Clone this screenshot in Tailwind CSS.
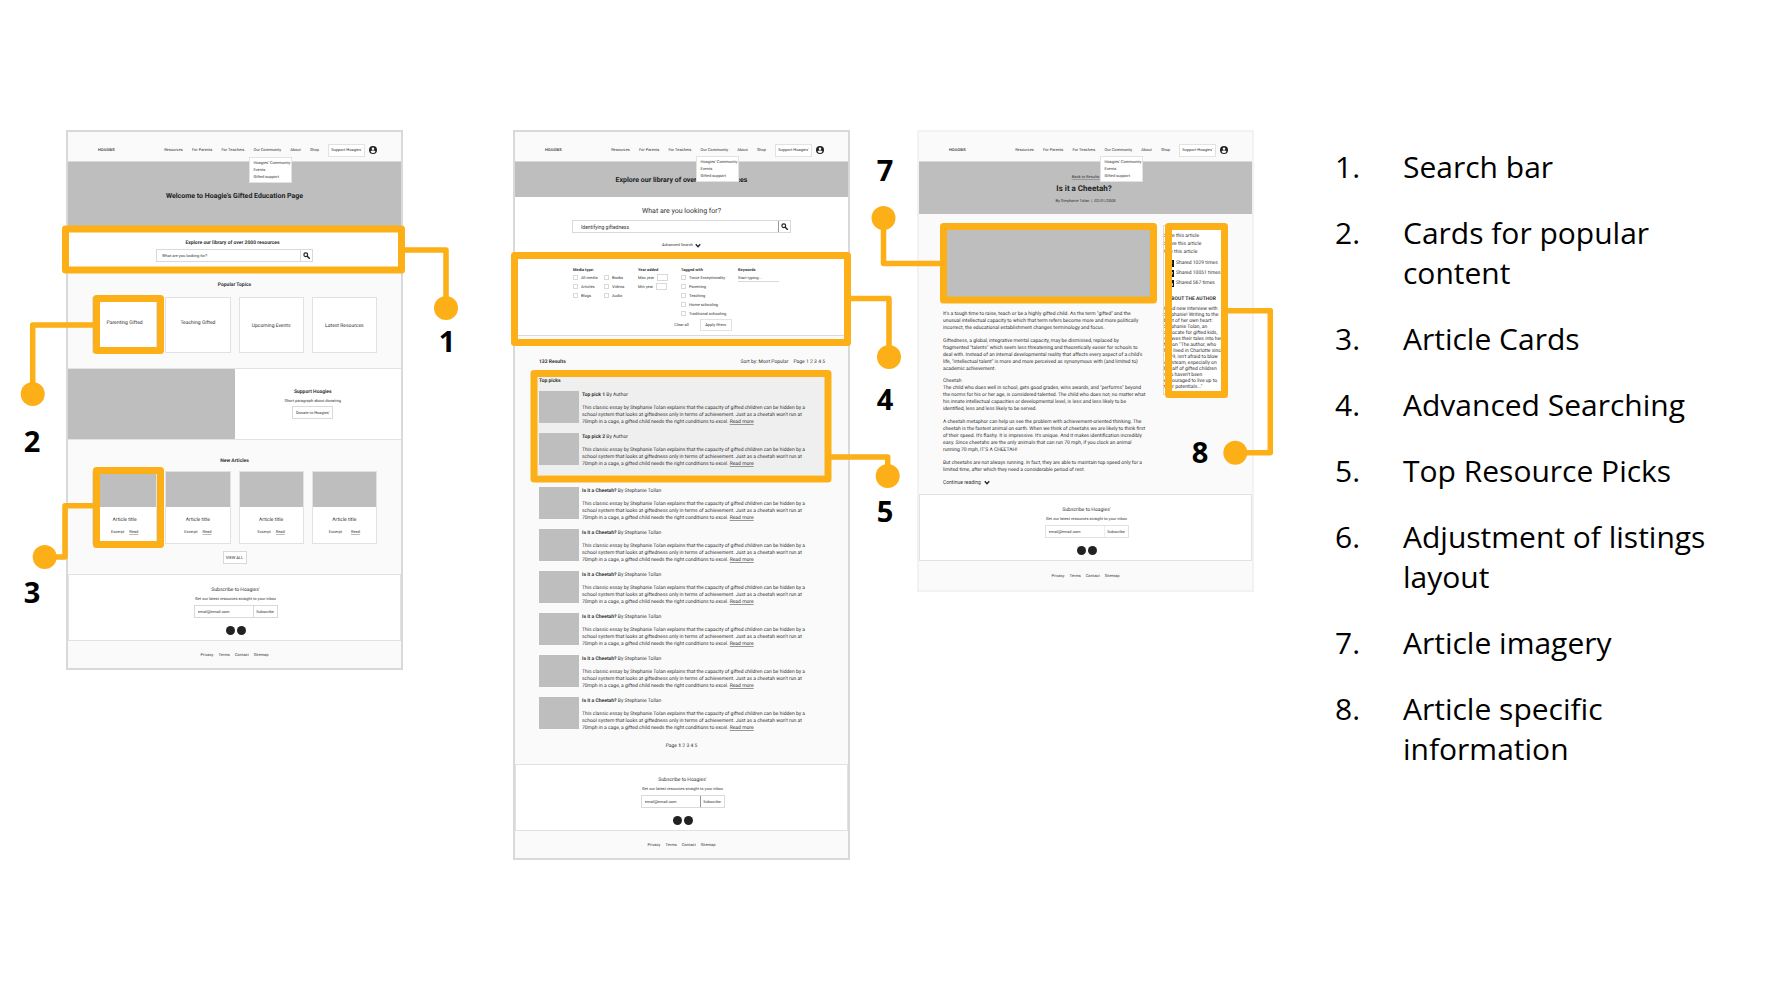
<!DOCTYPE html>
<html lang="en">
<head>
<meta charset="utf-8">
<title>Hoagies' wireframes, annotated</title>
<script src="https://cdn.jsdelivr.net/npm/@tailwindcss/browser@4"></script>
</head>
<body class="bg-white text-black">
<svg class="hidden" aria-hidden="true">
  <symbol id="user" viewBox="0 0 24 24"><circle cx="12" cy="12" r="12" fill="#222"/><circle cx="12" cy="8.500" r="3.800" fill="#fafafa"/><path d="M4.500 17.500c1-3 4-4 7.500-4s6.500 1 7.500 4c-2 2.500-4.500 3.700-7.500 3.700s-5.500-1.200-7.500-3.700z" fill="#fafafa"/></symbol>
  <symbol id="find" viewBox="0 0 24 24"><circle cx="9.500" cy="9.500" r="6.500" fill="none" stroke="#222" stroke-width="4"/><path d="M14.500 14.500L21.500 21.500" stroke="#222" stroke-width="5" stroke-linecap="round"/></symbol>
  <symbol id="chev" viewBox="0 0 12 10"><path d="M1.500 2.500L6 7.500L10.500 2.500" fill="none" stroke="#222" stroke-width="2.600"/></symbol>
</svg>
<main class="flex items-start pl-[66px] pr-12 pt-[130px] pb-16">

  <!-- Home page -->
  <figure class="relative mr-[110px] w-[337px] shrink-0">
    <div class="border-2 border-[#d9d9d9] bg-[#fafafa] font-['Roboto',sans-serif] text-[4px] leading-[6px] text-[#333] [text-rendering:geometricPrecision] [&_input]:outline-none">
      <header class="flex h-[30px] items-center border-b border-[#d9d9d9] pl-[30px] pr-6 pt-[7px]">
        <b class="font-medium">HOAGIES</b>
        <nav class="ml-auto flex items-center gap-[9px] whitespace-nowrap">
          <a href="#">Resources</a><a href="#">For Parents</a><a href="#">For Teachers</a>
          <div class="relative"><a href="#">Our Community</a>
            <ul class="absolute -left-1 top-full z-10 mt-1 flex w-[43px] flex-col gap-px border border-[#e2e2e2] bg-white py-[2px] pl-[3px]"><li><a href="#">Hoagies' Community</a></li><li><a href="#">Events</a></li><li><a href="#">Gifted support</a></li></ul>
          </div>
          <a href="#">About</a><a href="#">Shop</a>
          <button class="h-[13px] w-[37px] border border-[#e2e2e2] bg-white">Support Hoagies'</button>
        </nav>
        <svg class="ml-1 size-[8px]"><use href="#user"/></svg>
      </header>
      <div class="flex h-16 items-center justify-center bg-[#bebebe] pt-[3px]"><h1 class="text-[7px] font-bold text-[#222]">Welcome to Hoagie's Gifted Education Page</h1></div>
      <section class="flex h-[46px] flex-col items-center bg-white pt-[14px]">
        <h2 class="pr-1 text-[5px] font-bold">Explore our library of over 2000 resources</h2>
        <form class="mt-[3px] flex h-[13px] w-[157px] border border-[#d9d9d9]">
          <input aria-label="Search" placeholder="What are you looking for?" class="min-w-0 flex-1 pl-[5px] placeholder:text-[#333]">
          <button type="button" aria-label="Search" class="flex w-3 items-center justify-center border-l border-[#d9d9d9]"><svg class="size-[7px]"><use href="#find"/></svg></button>
        </form>
      </section>
      <section class="px-6 pb-[15px] pt-[10px]">
        <h2 class="text-center text-[5px] font-bold">Popular Topics</h2>
        <div class="mt-[9px] grid grid-cols-4 gap-2 text-center text-[5px]">
          <a href="#" class="flex h-14 items-center justify-center border border-[#e2e2e2] bg-white pb-1">Parenting Gifted</a>
          <a href="#" class="flex h-14 items-center justify-center border border-[#e2e2e2] bg-white pb-1">Teaching Gifted</a>
          <a href="#" class="flex h-14 items-center justify-center border border-[#e2e2e2] bg-white pt-[2px]">Upcoming Events</a>
          <a href="#" class="flex h-14 items-center justify-center border border-[#e2e2e2] bg-white pt-[2px]">Latest Resources</a>
        </div>
      </section>
      <section class="grid h-[72px] grid-cols-2 border-y border-[#e2e2e2] bg-white">
        <div class="bg-[#bebebe]"></div>
        <div class="flex flex-col items-center pr-[10px] pt-5">
          <h2 class="text-[5px] font-bold">Support Hoagies</h2>
          <p class="mt-[3px]">Short paragraph about donating</p>
          <button class="mt-[2px] h-[13px] w-[41px] border border-[#d9d9d9] bg-white">Donate to Hoagies'</button>
        </div>
      </section>
      <section class="flex flex-col px-6 pb-[10px] pt-[18px]">
        <h2 class="text-center text-[5px] font-bold">New Articles</h2>
        <div class="mt-[7px] grid grid-cols-4 gap-2 text-center">
          <article class="h-[73px] border border-[#e2e2e2] bg-white"><div class="h-[35px] bg-[#bebebe]"></div><h3 class="mt-[10px] text-[5px]">Article title</h3><p class="mt-[6px] flex justify-center gap-[5px]">Excerpt <a href="#" class="underline decoration-[#bbb]">Read</a></p></article>
          <article class="h-[73px] border border-[#e2e2e2] bg-white"><div class="h-[35px] bg-[#bebebe]"></div><h3 class="mt-[10px] text-[5px]">Article title</h3><p class="mt-[6px] flex justify-center gap-[5px]">Excerpt <a href="#" class="underline decoration-[#bbb]">Read</a></p></article>
          <article class="h-[73px] border border-[#e2e2e2] bg-white"><div class="h-[35px] bg-[#bebebe]"></div><h3 class="mt-[10px] text-[5px]">Article title</h3><p class="mt-[6px] flex justify-center gap-[5px]">Excerpt <a href="#" class="underline decoration-[#bbb]">Read</a></p></article>
          <article class="h-[73px] border border-[#e2e2e2] bg-white"><div class="h-[35px] bg-[#bebebe]"></div><h3 class="mt-[10px] text-[5px]">Article title</h3><p class="mt-[6px] flex justify-center gap-[9px]">Excerpt <a href="#" class="underline decoration-[#bbb]">Read</a></p></article>
        </div>
        <button class="mt-[7px] h-[13px] w-6 self-center border border-[#d9d9d9] bg-white">VIEW ALL</button>
      </section>
      <section class="flex h-[67px] flex-col items-center border border-[#e2e2e2] bg-white pl-[2px] pt-3">
        <h2 class="text-[5px]">Subscribe to Hoagies'</h2>
        <p class="mt-[3px]">Get our latest resources straight to your inbox</p>
        <form class="mt-[3px] flex h-[13px] w-[84px] border border-[#d9d9d9]"><input aria-label="Email" value="email@email.com" class="min-w-0 flex-1 pl-[3px]"><button type="button" class="w-6 border-l border-[#d9d9d9]">Subscribe</button></form>
        <div class="mt-2 flex gap-[2px]"><i class="size-[9px] rounded-full bg-[#222]"></i><i class="size-[9px] rounded-full bg-[#222]"></i></div>
      </section>
      <footer class="flex h-[27px] items-center justify-center gap-[5px]"><a href="#">Privacy</a><a href="#">Terms</a><a href="#">Contact</a><a href="#">Sitemap</a></footer>
    </div>
    <svg class="absolute left-0 top-0 z-20 h-[540px] w-[336px] overflow-visible font-['Open_Sans',sans-serif] text-[29px] font-bold" viewBox="66 130 336 540" text-anchor="middle">
      <g fill="none" stroke="#fcaf17" stroke-width="7" stroke-linejoin="round"><rect x="65.500" y="229" width="336" height="41"/><rect x="96.500" y="298.500" width="64" height="52"/><rect x="96.500" y="470.500" width="64" height="74"/></g>
      <g fill="none" stroke="#fcaf17" stroke-width="5.500" stroke-linejoin="round"><path d="M403 250H446V308"/><path d="M95 325H32.700V394"/><path d="M95 505.700H65V557H45"/></g>
      <g fill="#fcaf17"><circle cx="446" cy="308" r="12"/><circle cx="32.700" cy="394" r="12"/><circle cx="44.700" cy="557" r="12"/></g>
      <text x="447" y="352">1</text><text x="32" y="452">2</text><text x="32" y="603">3</text>
    </svg>
  </figure>

  <!-- Search results -->
  <figure class="relative mr-[67px] w-[337px] shrink-0">
    <div class="border-2 border-[#d9d9d9] bg-[#fafafa] font-['Roboto',sans-serif] text-[4px] leading-[6px] text-[#333] [text-rendering:geometricPrecision] [&_input]:outline-none">
      <header class="flex h-[30px] items-center border-b border-[#d9d9d9] pl-[30px] pr-6 pt-[7px]">
        <b class="font-medium">HOAGIES</b>
        <nav class="ml-auto flex items-center gap-[9px] whitespace-nowrap">
          <a href="#">Resources</a><a href="#">For Parents</a><a href="#">For Teachers</a>
          <div class="relative"><a href="#">Our Community</a>
            <ul class="absolute -left-1 top-full z-10 mt-[3px] flex w-[43px] flex-col gap-px border border-[#e2e2e2] bg-white py-[2px] pl-[3px]"><li><a href="#">Hoagies' Community</a></li><li><a href="#">Events</a></li><li><a href="#">Gifted support</a></li></ul>
          </div>
          <a href="#">About</a><a href="#">Shop</a>
          <button class="h-[13px] w-[37px] border border-[#e2e2e2] bg-white">Support Hoagies'</button>
        </nav>
        <svg class="ml-1 size-[8px]"><use href="#user"/></svg>
      </header>
      <div class="flex h-[35px] items-center justify-center bg-[#bebebe]"><h1 class="text-[7px] font-bold text-[#222]">Explore our library of over 2000 resources</h1></div>
      <section class="flex flex-col items-center border-b border-[#d9d9d9] bg-white pb-1 pt-[10px]">
        <h2 class="text-[7px] leading-[8px]">What are you looking for?</h2>
        <form class="mt-[5px] flex h-[13px] w-[219px] border border-[#d9d9d9]">
          <input aria-label="Search" value="Identifying giftedness" class="min-w-0 flex-1 pl-2 text-[5px]">
          <button type="button" aria-label="Search" class="flex w-3 items-center justify-center border-l border-[#999]"><svg class="size-[7px]"><use href="#find"/></svg></button>
        </form>
        <button class="mt-[9px] flex h-[6px] items-center gap-[2px]">Advanced Search <svg class="h-[5px] w-[6px]"><use href="#chev"/></svg></button>
        <div class="mt-[19px] grid w-full grid-cols-[65px_43px_57px_41px] pl-[58px] [&_b]:block [&_input[type=checkbox]]:size-[5px] [&_input[type=checkbox]]:appearance-none [&_input[type=checkbox]]:border [&_input[type=checkbox]]:border-[#d9d9d9] [&_label]:flex [&_label]:h-[9px] [&_label]:items-center [&_label]:gap-[3px] [&_label]:whitespace-nowrap">
          <div><b>Media type:</b><div class="grid grid-cols-[31px_34px]"><label><input type="checkbox">All media</label><label><input type="checkbox">Books</label><label><input type="checkbox">Articles</label><label><input type="checkbox">Videos</label><label><input type="checkbox">Blogs</label><label><input type="checkbox">Audio</label></div></div>
          <div><b>Year added</b><label>Max year<input class="h-[7px] w-[11px] border border-[#d9d9d9]"></label><label>Min year<input class="h-[7px] w-[11px] border border-[#d9d9d9]"></label></div>
          <div><b>Tagged with</b><label><input type="checkbox">Twice Exceptionality</label><label><input type="checkbox">Parenting</label><label><input type="checkbox">Teaching</label><label><input type="checkbox">Home schooling</label><label><input type="checkbox">Traditional schooling</label></div>
          <div><b>Keywords</b><input aria-label="Keywords" placeholder="Start typing..." class="block h-[9px] w-[41px] border-b border-[#d9d9d9] placeholder:text-[#333]"></div>
        </div>
        <div class="mt-px flex items-center gap-[11px] pl-[43px]"><button>Clear all</button><button class="h-3 w-8 border border-[#e2e2e2]">Apply filters</button></div>
      </section>
      <section class="px-[22px] pb-[14px] pt-[23px] leading-[7px] [&_article]:flex [&_article]:h-[36px] [&_article]:gap-[3px] [&_article>div]:whitespace-nowrap [&_article>div]:pt-px [&_article>i]:h-8 [&_article>i]:w-10 [&_article>i]:shrink-0 [&_article>i]:bg-[#bebebe] [&_article_p]:mt-[6px] [&_article_a]:underline [&_article_a]:decoration-[#999]">
        <div class="flex gap-[5px] pl-[2px] pr-px text-[5px]"><b class="mr-auto">132 Results</b><span>Sort by: Most Popular</span><span>Page 1 2 3 4 5</span></div>
        <div class="mt-[11px] flex flex-col gap-[6px] bg-[#efefef] pb-[6px] pl-[2px] pt-px text-[5px]">
          <b>Top picks</b>
          <article><i></i><div><h3><b>Top pick 1</b> By Author</h3><p>This classic essay by Stephanie Tolan explains that the capacity of gifted children can be hidden by a<br>school system that looks at giftedness only in terms of achievement. Just as a cheetah won't run at<br>70mph in a cage, a gifted child needs the right conditions to excel. <a href="#">Read more</a></p></div></article>
          <article><i></i><div><h3><b>Top pick 2</b> By Author</h3><p>This classic essay by Stephanie Tolan explains that the capacity of gifted children can be hidden by a<br>school system that looks at giftedness only in terms of achievement. Just as a cheetah won't run at<br>70mph in a cage, a gifted child needs the right conditions to excel. <a href="#">Read more</a></p></div></article>
        </div>
        <div class="mt-3 flex flex-col gap-[6px] pl-[2px] text-[5px]">
          <article><i></i><div><h3><b>Is it a Cheetah?</b> By Stephanie Tollan</h3><p>This classic essay by Stephanie Tolan explains that the capacity of gifted children can be hidden by a<br>school system that looks at giftedness only in terms of achievement. Just as a cheetah won't run at<br>70mph in a cage, a gifted child needs the right conditions to excel. <a href="#">Read more</a></p></div></article>
          <article><i></i><div><h3><b>Is it a Cheetah?</b> By Stephanie Tollan</h3><p>This classic essay by Stephanie Tolan explains that the capacity of gifted children can be hidden by a<br>school system that looks at giftedness only in terms of achievement. Just as a cheetah won't run at<br>70mph in a cage, a gifted child needs the right conditions to excel. <a href="#">Read more</a></p></div></article>
          <article><i></i><div><h3><b>Is it a Cheetah?</b> By Stephanie Tollan</h3><p>This classic essay by Stephanie Tolan explains that the capacity of gifted children can be hidden by a<br>school system that looks at giftedness only in terms of achievement. Just as a cheetah won't run at<br>70mph in a cage, a gifted child needs the right conditions to excel. <a href="#">Read more</a></p></div></article>
          <article><i></i><div><h3><b>Is it a Cheetah?</b> By Stephanie Tollan</h3><p>This classic essay by Stephanie Tolan explains that the capacity of gifted children can be hidden by a<br>school system that looks at giftedness only in terms of achievement. Just as a cheetah won't run at<br>70mph in a cage, a gifted child needs the right conditions to excel. <a href="#">Read more</a></p></div></article>
          <article><i></i><div><h3><b>Is it a Cheetah?</b> By Stephanie Tollan</h3><p>This classic essay by Stephanie Tolan explains that the capacity of gifted children can be hidden by a<br>school system that looks at giftedness only in terms of achievement. Just as a cheetah won't run at<br>70mph in a cage, a gifted child needs the right conditions to excel. <a href="#">Read more</a></p></div></article>
          <article><i></i><div><h3><b>Is it a Cheetah?</b> By Stephanie Tollan</h3><p>This classic essay by Stephanie Tolan explains that the capacity of gifted children can be hidden by a<br>school system that looks at giftedness only in terms of achievement. Just as a cheetah won't run at<br>70mph in a cage, a gifted child needs the right conditions to excel. <a href="#">Read more</a></p></div></article>
        </div>
        <p class="mt-[10px] text-center text-[5px]">Page <b>1</b> 2 3 4 5</p>
      </section>
      <section class="flex h-[67px] flex-col items-center border border-[#e2e2e2] bg-white pl-[2px] pt-3">
        <h2 class="text-[5px]">Subscribe to Hoagies'</h2>
        <p class="mt-[3px]">Get our latest resources straight to your inbox</p>
        <form class="mt-[3px] flex h-[13px] w-[84px] border border-[#d9d9d9]"><input aria-label="Email" value="email@email.com" class="min-w-0 flex-1 pl-[3px]"><button type="button" class="w-6 border-l border-[#999]">Subscribe</button></form>
        <div class="mt-2 flex gap-[2px]"><i class="size-[9px] rounded-full bg-[#222]"></i><i class="size-[9px] rounded-full bg-[#222]"></i></div>
      </section>
      <footer class="flex h-[27px] items-center justify-center gap-[5px]"><a href="#">Privacy</a><a href="#">Terms</a><a href="#">Contact</a><a href="#">Sitemap</a></footer>
    </div>
    <svg class="absolute left-0 top-0 z-20 h-[730px] w-[336px] overflow-visible font-['Open_Sans',sans-serif] text-[29px] font-bold" viewBox="513 130 336 730" text-anchor="middle">
      <g fill="none" stroke="#fcaf17" stroke-width="7" stroke-linejoin="round"><rect x="514.500" y="255.500" width="333" height="87"/><rect x="534" y="373.500" width="294" height="105.500"/></g>
      <g fill="none" stroke="#fcaf17" stroke-width="5.500" stroke-linejoin="round"><path d="M850 298.500H889V357"/><path d="M830 457H887.700V476"/></g>
      <g fill="#fcaf17"><circle cx="889" cy="357" r="12"/><circle cx="887.700" cy="476" r="12"/></g>
      <text x="885" y="410">4</text><text x="885" y="522">5</text>
    </svg>
  </figure>

  <!-- Article page -->
  <figure class="relative mr-[81px] w-[337px] shrink-0">
    <div class="border-2 border-[#f2f2f2] bg-[#fafafa] font-['Roboto',sans-serif] text-[4px] leading-[6px] text-[#333] [text-rendering:geometricPrecision] [&_input]:outline-none">
      <header class="flex h-[30px] items-center border-b border-[#d9d9d9] pl-[30px] pr-6 pt-[7px]">
        <b class="font-medium">HOAGIES</b>
        <nav class="ml-auto flex items-center gap-[9px] whitespace-nowrap">
          <a href="#">Resources</a><a href="#">For Parents</a><a href="#">For Teachers</a>
          <div class="relative"><a href="#">Our Community</a>
            <ul class="absolute -left-1 top-full z-10 mt-[3px] flex w-[43px] flex-col gap-px border border-[#e2e2e2] bg-white py-[2px] pl-[3px]"><li><a href="#">Hoagies' Community</a></li><li><a href="#">Events</a></li><li><a href="#">Gifted support</a></li></ul>
          </div>
          <a href="#">About</a><a href="#">Shop</a>
          <button class="h-[13px] w-[37px] border border-[#e2e2e2] bg-white">Support Hoagies'</button>
        </nav>
        <svg class="ml-1 size-[8px]"><use href="#user"/></svg>
      </header>
      <div class="flex h-[52px] flex-col items-center bg-[#bebebe] pt-3"><a href="#" class="underline decoration-[#999]">Back to Results</a><h1 class="mt-[5px] pr-[3px] text-[8px] font-bold leading-[8px] text-[#222]">Is it a Cheetah?</h1><p class="mt-[5px]">By Stephanie Tolan &nbsp;|&nbsp; 02/01/2008</p></div>
      <div class="flex items-start pb-2 pl-6 pt-[11px]">
        <article class="w-[210px] whitespace-nowrap pt-px text-[5px] leading-[7px]">
          <div class="mb-[11px] h-[74px] bg-[#bebebe]"></div>
          <p>It's a tough time to raise, teach or be a highly gifted child. As the term "gifted" and the<br>unusual intellectual capacity to which that term refers become more and more politically<br>incorrect, the educational establishment changes terminology and focus.</p>
          <p class="mt-[6px]">Giftedness, a global, integrative mental capacity, may be dismissed, replaced by<br>fragmented "talents" which seem less threatening and theoretically easier for schools to<br>deal with. Instead of an internal developmental reality that affects every aspect of a child's<br>life, "intellectual talent" is more and more perceived as synonymous with (and limited to)<br>academic achievement.</p>
          <p class="mt-[5px]">Cheetah<br>The child who does well in school, gets good grades, wins awards, and "performs" beyond<br>the norms for his or her age, is considered talented. The child who does not, no matter what<br>his innate intellectual capacities or developmental level, is less and less likely to be<br>identified, less and less likely to be served.</p>
          <p class="mt-[6px]">A cheetah metaphor can help us see the problem with achievement-oriented thinking. The<br>cheetah is the fastest animal on earth. When we think of cheetahs we are likely to think first<br>of their speed. It's flashy. It is impressive. It's unique. And it makes identification incredibly<br>easy. Since cheetahs are the only animals that can run 70 mph, if you clock an animal<br>running 70 mph, IT'S A CHEETAH!</p>
          <p class="mt-[6px]">But cheetahs are not always running. In fact, they are able to maintain top speed only for a<br>limited time, after which they need a considerable period of rest.</p>
          <button class="mt-[5px] flex h-[7px] items-center gap-[3px]">Continue reading <svg class="h-[5px] w-[6px]"><use href="#chev"/></svg></button>
        </article>
        <aside class="ml-[10px] h-[170px] w-[63px] whitespace-nowrap border border-[#d9d9d9] bg-white pt-[6px] text-[5px]">
          <ul class="leading-[8px]"><li><a href="#">Save this article</a></li><li><a href="#">Share this article</a></li><li><a href="#">Cite this article</a></li></ul>
          <ul class="mt-1 flex flex-col gap-[3px] pl-[3px] leading-[5px]">
            <li class="flex items-center gap-[2px]"><svg class="size-[7px]" viewBox="0 0 12 12"><path d="M0 0h12v12H0z" fill="#111"/><path d="M7 12V7h2V5H7V4h2V2H6v3H5v2h1v5z" fill="#fff"/></svg>Shared 1029 times</li>
            <li class="flex items-center gap-[2px]"><svg class="size-[7px]" viewBox="0 0 12 12"><path d="M0 0h12v12H0z" fill="#111"/><path d="M2 3l3 2 2-2 3 1-1 4-4 2-3-1z" fill="#fff"/></svg>Shared 10051 times</li>
            <li class="flex items-center gap-[2px]"><svg class="size-[7px]" viewBox="0 0 12 12"><path d="M0 0h12v12H0z" fill="#111"/><path d="M2 5h2v5H2zM5 5h4l1 2v3H8V7H7v3H5zM2 2h2v2H2z" fill="#fff"/></svg>Shared 567 times</li>
          </ul>
          <h2 class="mt-[9px] pl-1 font-bold">ABOUT THE AUTHOR</h2>
          <p class="mt-1">Read new interview with<br>Stephanie! Writing to the<br>beat of her own heart:<br>Stephanie Tolan, an<br>advocate for gifted kids,<br>weaves their tales into her<br>fiction "The author, who<br>has lived in Charlotte since<br>1999, isn't afraid to blow<br>off steam, especially on<br>behalf of gifted children<br>who haven't been<br>encouraged to live up to<br>their potentials..."</p>
        </aside>
      </div>
      <section class="flex h-[67px] flex-col items-center border border-[#e2e2e2] bg-white pl-[2px] pt-3">
        <h2 class="text-[5px]">Subscribe to Hoagies'</h2>
        <p class="mt-[3px]">Get our latest resources straight to your inbox</p>
        <form class="mt-[3px] flex h-[13px] w-[84px] border border-[#e2e2e2]"><input aria-label="Email" value="email@email.com" class="min-w-0 flex-1 pl-[3px]"><button type="button" class="w-6 border-l border-[#eee]">Subscribe</button></form>
        <div class="mt-2 flex gap-[2px]"><i class="size-[9px] rounded-full bg-[#222]"></i><i class="size-[9px] rounded-full bg-[#222]"></i></div>
      </section>
      <footer class="flex h-[29px] items-center justify-center gap-[5px]"><a href="#">Privacy</a><a href="#">Terms</a><a href="#">Contact</a><a href="#">Sitemap</a></footer>
    </div>
    <svg class="absolute left-0 top-0 z-20 h-[462px] w-[336px] overflow-visible font-['Open_Sans',sans-serif] text-[29px] font-bold" viewBox="917 130 336 462" text-anchor="middle">
      <g fill="none" stroke="#fcaf17" stroke-width="7" stroke-linejoin="round"><rect x="943.500" y="226.500" width="210" height="73.500"/><rect x="1168.500" y="226.500" width="56" height="168"/></g>
      <g fill="none" stroke="#fcaf17" stroke-width="5.500" stroke-linejoin="round"><path d="M883.500 218V263.500H942"/><path d="M1227 310.700H1270.300V452.700H1235"/></g>
      <g fill="#fcaf17"><circle cx="883.500" cy="218" r="12"/><circle cx="1235.300" cy="452.700" r="12"/></g>
      <text x="885" y="181">7</text><text x="1200" y="463">8</text>
    </svg>
  </figure>

  <ol class="mt-[17px] flex min-w-0 flex-1 flex-col gap-[26px] font-['Open_Sans',sans-serif] text-[30px] leading-[40px] [&>li]:grid [&>li]:grid-cols-[68px_1fr]">
    <li><span>1.</span><span>Search bar</span></li>
    <li><span>2.</span><span>Cards for popular content</span></li>
    <li><span>3.</span><span>Article Cards</span></li>
    <li><span>4.</span><span>Advanced Searching</span></li>
    <li><span>5.</span><span>Top Resource Picks</span></li>
    <li><span>6.</span><span>Adjustment of listings layout</span></li>
    <li><span>7.</span><span>Article imagery</span></li>
    <li><span>8.</span><span>Article specific information</span></li>
  </ol>
</main>
</body>
</html>
